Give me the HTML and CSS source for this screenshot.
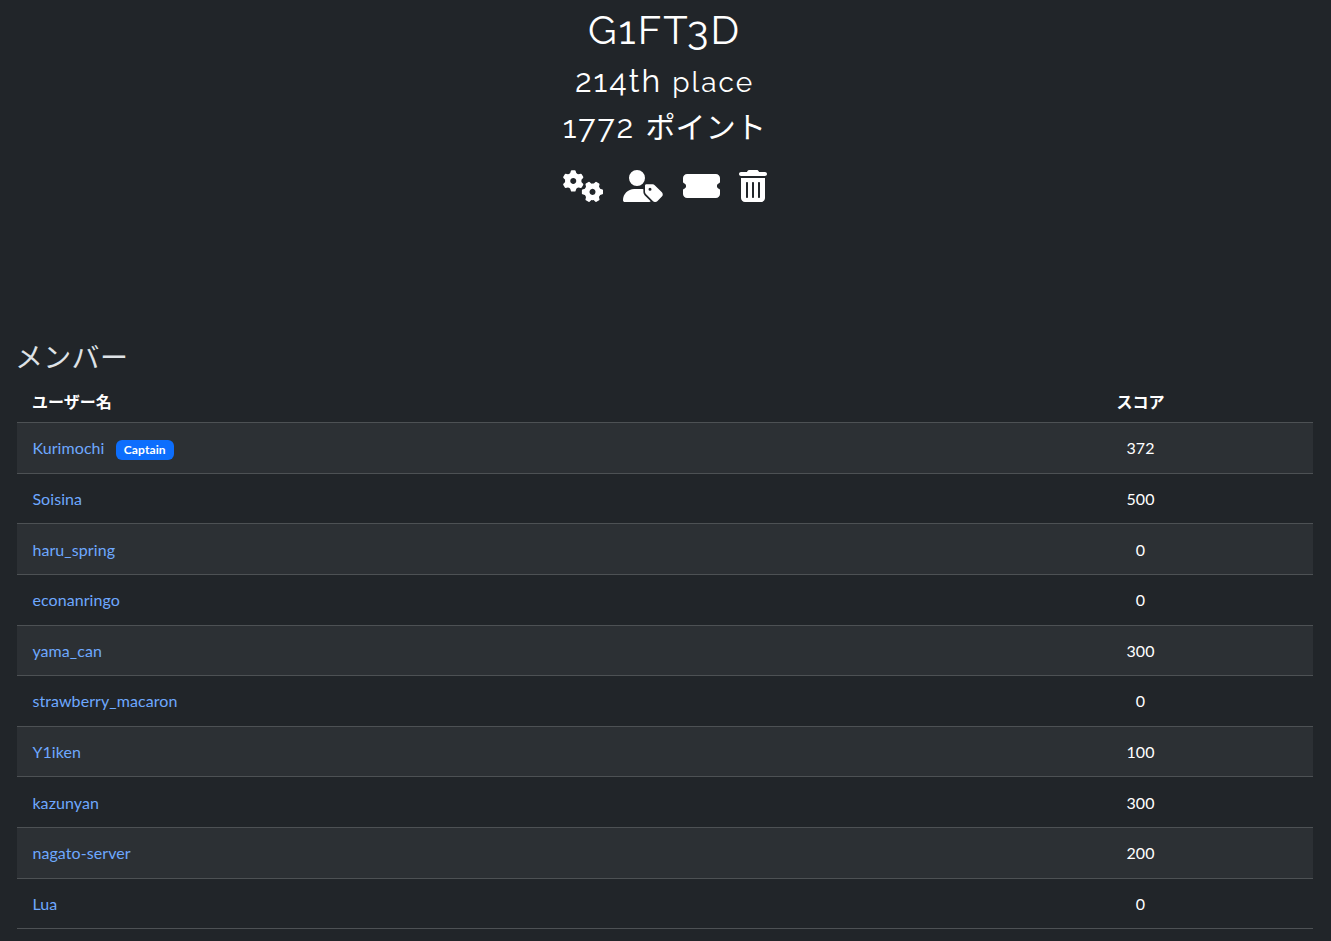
FILE: index.html
```html
<!DOCTYPE html>
<html lang="ja">
<head>
    <meta charset="UTF-8">
    <meta name="viewport" content="width=device-width, initial-scale=1.0">
    <title>G1FT3D</title>
    <link rel="stylesheet" href="styles.css">
</head>
<body>
    <header class="team-header">
        <h1 class="team-name">G1FT3D</h1>
        <h2 class="team-place">214th <small>place</small></h2>
        <h2 class="team-points">1772 <span class="points-label">ポイント</span></h2>
        <div class="actions">
            <a class="action" aria-label="Edit Team">
                <svg width="40" height="32" viewBox="0 0 640 512">
                    <defs>
                        <g id="gear">
                            <circle r="90" fill="none" stroke-width="84" />
                            <g stroke-linejoin="round">
                                <path id="tooth" d="M-24-156L24-156L40-105L-40-105Z" stroke-width="28" />
                                <use href="#tooth" transform="rotate(60)" />
                                <use href="#tooth" transform="rotate(120)" />
                                <use href="#tooth" transform="rotate(180)" />
                                <use href="#tooth" transform="rotate(240)" />
                                <use href="#tooth" transform="rotate(300)" />
                            </g>
                        </g>
                    </defs>
                    <use href="#gear" class="gear" transform="translate(164 174)" />
                    <use href="#gear" class="gear" transform="translate(472 350) rotate(30)" />
                </svg>
            </a>
            <a class="action" aria-label="Choose Captain">
                <svg width="40" height="32" viewBox="0 0 640 512">
                    <path d="M224 256A128 128 0 1 0 224 0a128 128 0 1 0 0 256zm-45.700 48C79.800 304 0 383.800 0 482.300C0 498.700 13.300 512 29.700 512H418.300c10 0 18.900-4.900 24.300-12.500L349.300 406.200c-15-15-23.400-35.400-23.400-56.600V306.200c-8.500-1.400-17.300-2.200-26.200-2.200H178.300z" />
                    <path fill-rule="evenodd" d="M352 250.300v99.300c0 12.700 5.100 24.900 14.100 33.900L480.700 498.100c18.700 18.700 49.100 18.700 67.900 0l73.400-73.400c18.700-18.700 18.700-49.100 0-67.900L507.400 242.300c-9-9-21.200-14.100-33.900-14.100H374.100c-12.200 0-22.100 9.900-22.100 22.100zm56 58a24 24 0 1 1 48 0a24 24 0 1 1-48 0z" />
                </svg>
            </a>
            <a class="action" aria-label="Invite Users">
                <svg width="37" height="32" viewBox="0 0 576 512" preserveAspectRatio="none">
                    <path d="M0 128C0 92.700 28.700 64 64 64H512c35.300 0 64 28.700 64 64v64c0 8.800-7.400 15.700-15.700 18.600C541.500 217.100 528 235 528 256s13.500 38.900 32.300 45.400c8.300 2.900 15.700 9.800 15.700 18.600v64c0 35.300-28.700 64-64 64H64c-35.300 0-64-28.700-64-64V320c0-8.800 7.400-15.700 15.700-18.600C34.500 294.900 48 277 48 256s-13.500-38.900-32.300-45.400C7.400 207.700 0 200.800 0 192V128z" />
                </svg>
            </a>
            <a class="action" aria-label="Disband Team">
                <svg width="28" height="32" viewBox="0 0 448 512">
                    <path d="M135.200 17.700C140.600 6.800 151.700 0 163.800 0H284.200c12.100 0 23.200 6.800 28.600 17.700L320 32h96c17.700 0 32 14.300 32 32s-14.300 32-32 32H32C14.300 96 0 81.700 0 64S14.300 32 32 32h96l7.200-14.300zM32 128H416V448c0 35.300-28.700 64-64 64H96c-35.300 0-64-28.700-64-64V128zm96 64c-8.800 0-16 7.200-16 16V432c0 8.800 7.200 16 16 16s16-7.200 16-16V208c0-8.800-7.200-16-16-16zm96 0c-8.800 0-16 7.200-16 16V432c0 8.800 7.200 16 16 16s16-7.200 16-16V208c0-8.800-7.200-16-16-16zm96 0c-8.800 0-16 7.200-16 16V432c0 8.800 7.200 16 16 16s16-7.200 16-16V208c0-8.800-7.200-16-16-16z" />
                </svg>
            </a>
        </div>
    </header>
    <main class="members">
        <h3 class="members-title">メンバー</h3>
        <table class="members-table">
            <thead>
                <tr><th class="user">ユーザー名</th><th class="score">スコア</th></tr>
            </thead>
            <tbody>
                <tr><td class="user"><a>Kurimochi</a><span class="badge">Captain</span></td><td class="score">372</td></tr>
                <tr><td class="user"><a>Soisina</a></td><td class="score">500</td></tr>
                <tr><td class="user"><a>haru_spring</a></td><td class="score">0</td></tr>
                <tr><td class="user"><a>econanringo</a></td><td class="score">0</td></tr>
                <tr><td class="user"><a>yama_can</a></td><td class="score">300</td></tr>
                <tr><td class="user"><a>strawberry_macaron</a></td><td class="score">0</td></tr>
                <tr><td class="user"><a>Y1iken</a></td><td class="score">100</td></tr>
                <tr><td class="user"><a>kazunyan</a></td><td class="score">300</td></tr>
                <tr><td class="user"><a>nagato-server</a></td><td class="score">200</td></tr>
                <tr><td class="user"><a>Lua</a></td><td class="score">0</td></tr>
            </tbody>
        </table>
    </main>
</body>
</html>
```
FILE: styles.css
```css
* {
    box-sizing: border-box;
}

body {
    margin: 0;
    height: 941px;
    overflow: hidden;
    background-color: #212529;
    color: #dee2e6;
    font-family: Lato, "Noto Sans CJK JP", sans-serif;
    font-size: 16px;
    line-height: 24px;
}

.team-header {
    display: flex;
    flex-direction: column;
    align-items: center;
    height: 340px;
    padding: 6px 2px 0 0;
    color: #fff;
}

.team-header h1,
.team-header h2 {
    margin: 0;
    font-family: Raleway, Lato, "Noto Sans CJK JP", sans-serif;
    font-weight: 400;
    letter-spacing: 2px;
    white-space: nowrap;
}

.team-header .team-name {
    font-size: 40px;
    line-height: 48px;
}

.team-header .team-place {
    margin-top: 8px;
    font-size: 32px;
    line-height: 38px;
}

.team-place small {
    font-size: 28px;
}

.team-header .team-points {
    margin-top: 6px;
    font-size: 32px;
    line-height: 38px;
}

.points-label {
    font-size: 30px;
    letter-spacing: 0.2px;
}

.actions {
    display: flex;
    gap: 20px;
    margin-top: 23px;
}

.action:last-child {
    margin-left: -1px;
}

.action svg {
    display: block;
    fill: #fff;
}

.gear {
    stroke: #fff;
}

.members {
    padding: 0 18px 0 17px;
}

.members-title {
    margin: 0 0 8px -2px;
    font-size: 28px;
    font-weight: 400;
    line-height: 34px;
    letter-spacing: 0.3px;
}

.members-table {
    width: 100%;
    table-layout: fixed;
    border-collapse: separate;
    border-spacing: 0;
    color: #fff;
}

.members-table th,
.members-table td {
    padding: 0 15px;
    border-bottom: 1px solid #4d5154;
}

.members-table th {
    height: 41.25px;
    padding-bottom: 1px;
}

.members-table td {
    height: 50.6px;
    padding-top: 0.7px;
}

.user {
    text-align: left;
}

.members-table .score {
    width: 345px;
    text-align: center;
}

.members-table tbody tr:nth-child(odd) {
    background-color: #2c3034;
}

.user a {
    margin-left: 0.4px;
    color: #6ea8fe;
    letter-spacing: 0.08px;
}

.badge {
    display: inline-block;
    margin-left: 11.3px;
    padding: 4px 8px;
    border-radius: 6px;
    background-color: #0d6efd;
    color: #fff;
    font-size: 12px;
    font-weight: 700;
    line-height: 12px;
    letter-spacing: 0.1px;
}
```
